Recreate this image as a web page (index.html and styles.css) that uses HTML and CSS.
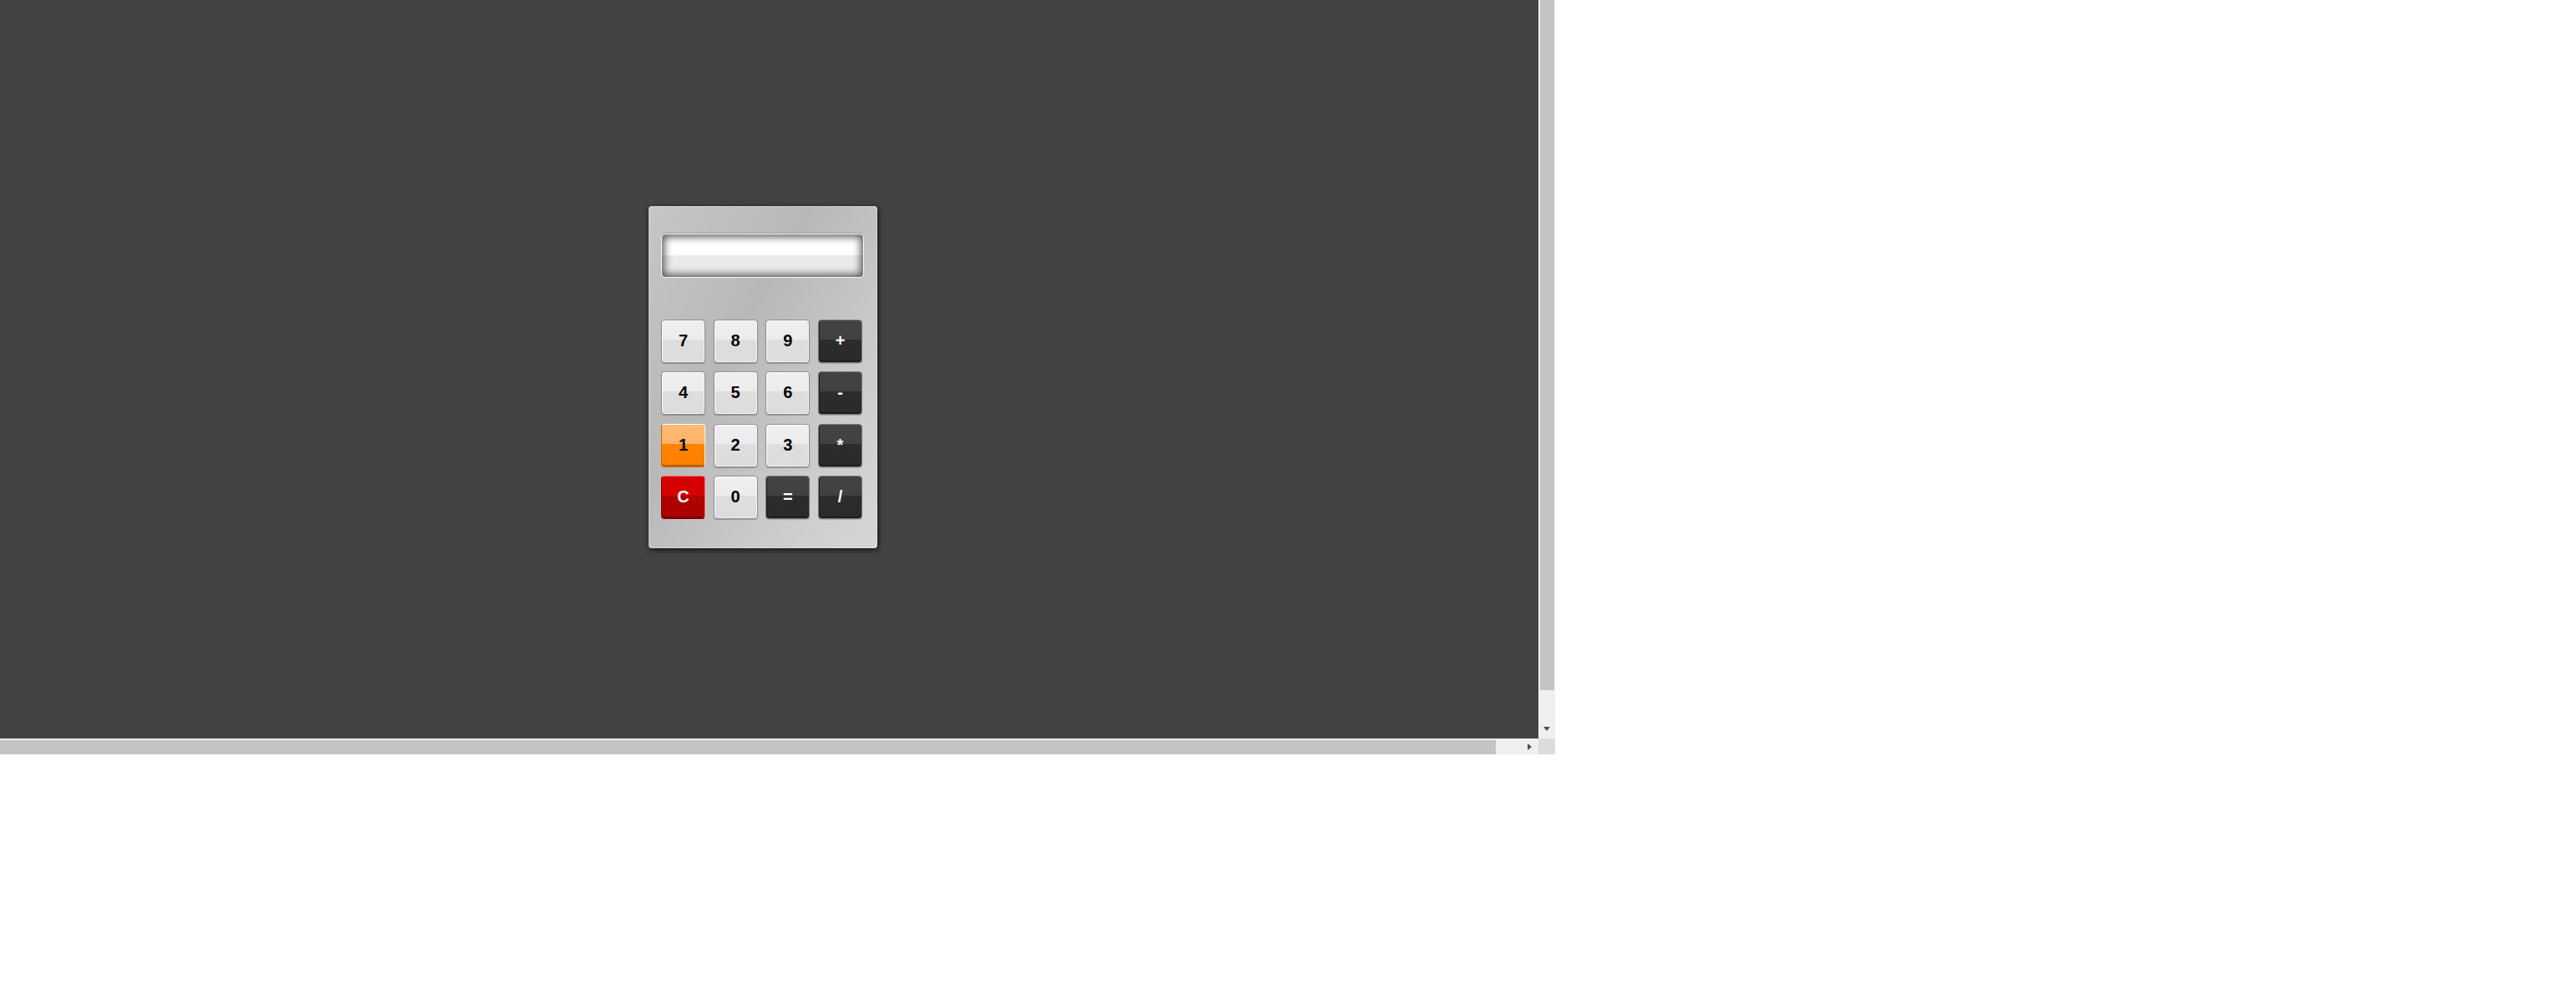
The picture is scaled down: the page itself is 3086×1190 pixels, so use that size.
FILE: index.html
```html
<!DOCTYPE html>
<html>
<head>
<meta charset="utf-8">
<link rel="stylesheet" href="styles.css">
</head>
<body>
<div class="frame">
  <div class="content">
    <div class="calc">
      <div class="display"></div>
      <div class="keys">
        <div class="key light">7</div>
        <div class="key light">8</div>
        <div class="key light">9</div>
        <div class="key dark">+</div>
        <div class="key light">4</div>
        <div class="key light">5</div>
        <div class="key light">6</div>
        <div class="key dark">-</div>
        <div class="key orange">1</div>
        <div class="key light">2</div>
        <div class="key light">3</div>
        <div class="key dark">*</div>
        <div class="key red">C</div>
        <div class="key light">0</div>
        <div class="key dark">=</div>
        <div class="key dark">/</div>
      </div>
    </div>
  </div>
  <div class="vbar">
    <div class="vthumb"></div>
    <div class="vtrack"><span class="arrow-down"></span></div>
  </div>
  <div class="hbar">
    <div class="hthumb"></div>
    <div class="htrack"><span class="arrow-right"></span></div>
  </div>
  <div class="corner"></div>
</div>
</body>
</html>
```

FILE: styles.css
```css
html, body {
  margin: 0;
  padding: 0;
  background: #ffffff;
}

.frame {
  display: grid;
  grid-template-columns: 1843px 20px;
  grid-template-rows: 885px 19px;
  width: 1863px;
}

.content {
  background: #434343;
  padding: 247px 0 0 777px;
  box-sizing: border-box;
  overflow: hidden;
}

.calc {
  width: 274px;
  height: 410px;
  box-sizing: border-box;
  padding: 33px 16px 0 15px;
  border-radius: 4px;
  background: linear-gradient(120deg, #c6c6c6 0%, #b8b8b8 38%, #cacaca 70%, #d6d6d6 100%);
  box-shadow: 0 0 1px 1px rgba(255,255,255,0.35) inset, 1px 2px 7px rgba(0,0,0,0.75);
}

.display {
  height: 53px;
  box-sizing: border-box;
  border: 1px solid #fafafa;
  border-radius: 5px;
  background: linear-gradient(to bottom, #ffffff 0%, #ffffff 50%, #eaeaea 50%, #eaeaea 100%);
  box-shadow: inset 0 0 10px 3px rgba(50,50,50,0.8), 0 -1px 0 #9a9a9a;
}

.keys {
  margin-top: 50px;
  display: grid;
  grid-template-columns: repeat(4, 53px);
  grid-auto-rows: 52px;
  column-gap: 9.67px;
  row-gap: 10.33px;
}

.key {
  box-sizing: border-box;
  border-radius: 4px;
  display: flex;
  align-items: center;
  justify-content: center;
  font-family: "Liberation Sans", Arial, sans-serif;
  font-weight: bold;
  font-size: 20px;
  padding-bottom: 1px;
}

.light {
  color: #000;
  border: 1px solid #8e8e8e;
  background: linear-gradient(to bottom, #efefef 0%, #ececec 46%, #dedede 46%, #dcdcdc 100%);
  box-shadow: inset 1px 1px 0 #ffffff, inset -1px -1px 0 #f4f4f4, 0 1px 1px rgba(0,0,0,0.25);
}

.dark {
  color: #fff;
  border: 1px solid #7a7a7a;
  background: linear-gradient(to bottom, #434343 0%, #414141 46%, #2c2c2c 46%, #2a2a2a 100%);
  box-shadow: inset 0 -2px 0 #1c1c1c, inset 1px 0 0 #1e1e1e, 0 1px 1px rgba(0,0,0,0.2);
}

.orange {
  color: #000;
  border: 1px solid #c86400;
  border-top-color: #ffffff;
  border-right-color: #fff3e6;
  background: linear-gradient(to bottom, #ffbb77 0%, #ffb366 46%, #ff8300 46%, #ff8000 100%);
  box-shadow: inset 0 -2px 0 #b85c00;
}

.red {
  color: #fff;
  border: 1px solid #7a0000;
  border-top-color: #ff7070;
  border-right-color: #ff8080;
  background: linear-gradient(to bottom, #d60000 0%, #d40000 46%, #b10000 46%, #ad0000 100%);
  box-shadow: inset 0 -2px 0 #7e0000;
}

.vbar {
  background: #f0f0f0;
  display: flex;
  flex-direction: column;
  padding: 0 1px 0 2px;
}

.vthumb {
  height: 827px;
  background: #c4c4c4;
}

.vtrack {
  flex: 1;
  display: flex;
  justify-content: center;
  padding-top: 44px;
  padding-right: 1px;
}

.arrow-down {
  width: 0;
  height: 0;
  border-left: 4.5px solid transparent;
  border-right: 4.5px solid transparent;
  border-top: 5px solid #505050;
}

.hbar {
  background: #f0f0f0;
  display: flex;
  padding-top: 2px;
}

.hthumb {
  width: 1792px;
  background: #c4c4c4;
}

.htrack {
  flex: 1;
  display: flex;
  align-items: flex-start;
  justify-content: flex-end;
  padding-right: 8px;
  padding-top: 4px;
}

.arrow-right {
  width: 0;
  height: 0;
  border-top: 4.5px solid transparent;
  border-bottom: 4.5px solid transparent;
  border-left: 5px solid #505050;
}

.corner {
  background: #dcdcdc;
}
```
